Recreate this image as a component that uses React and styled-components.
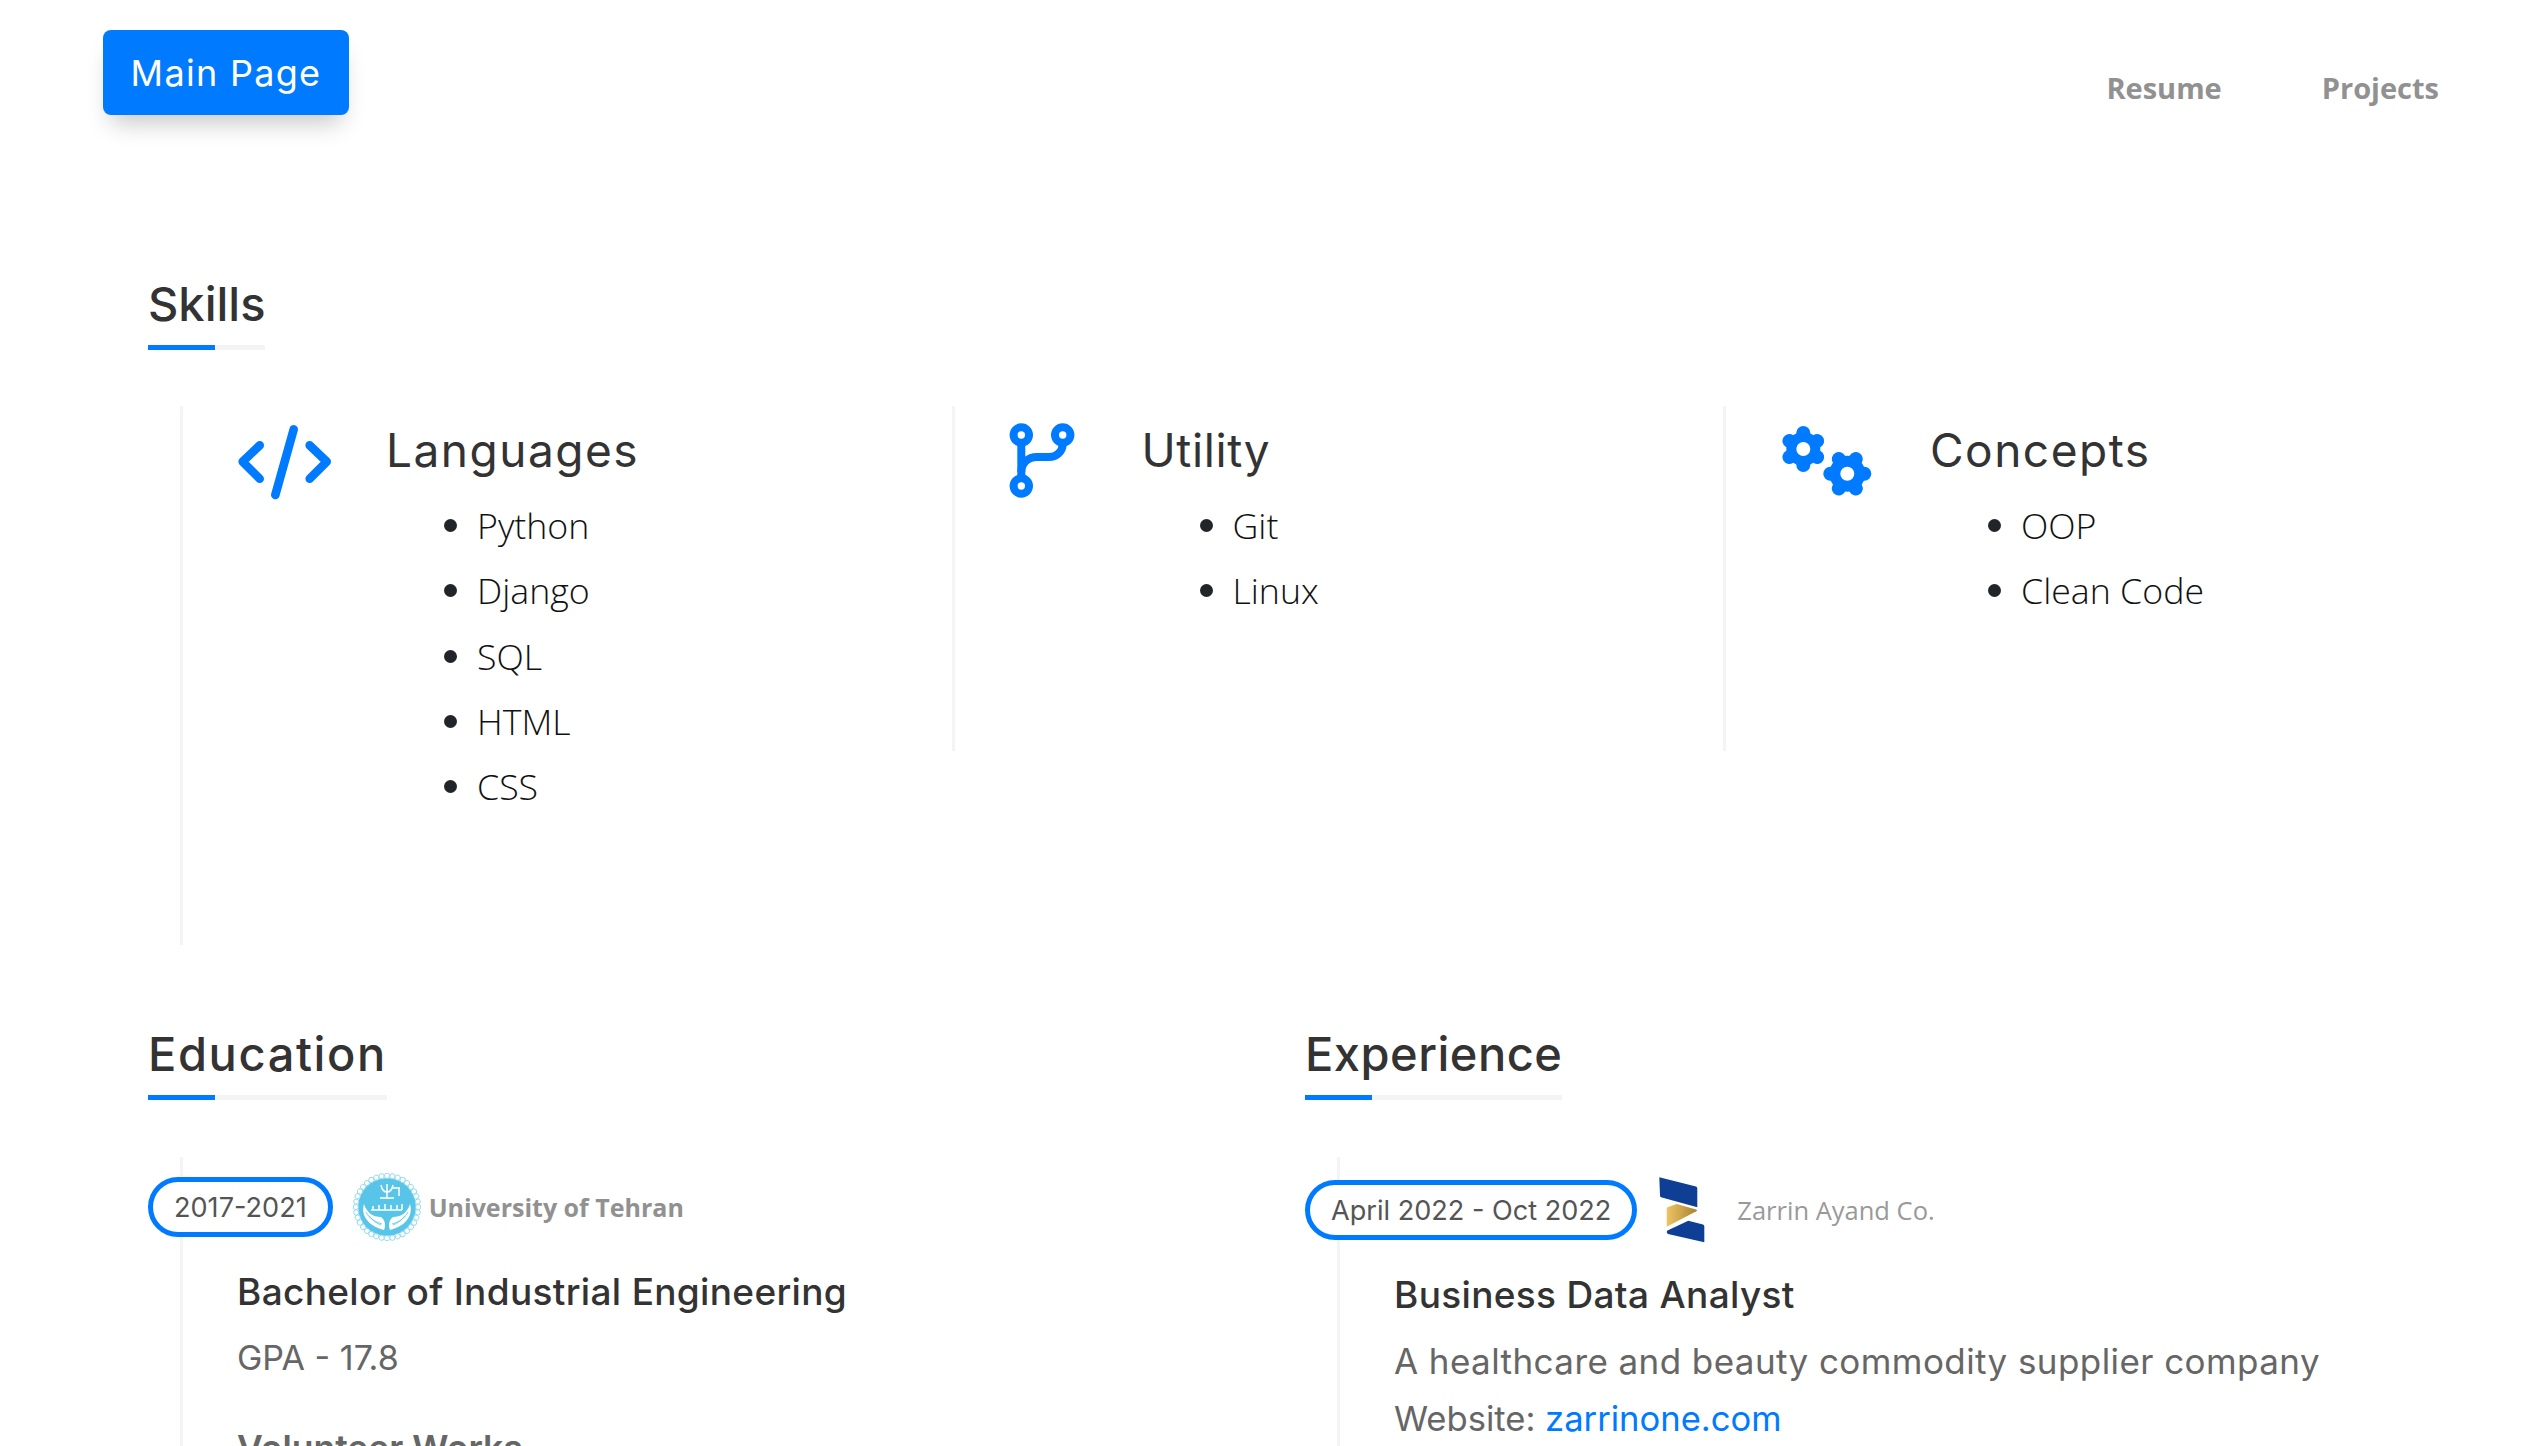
import React from 'react';
import styled, { createGlobalStyle } from 'styled-components';

const GlobalStyle = createGlobalStyle`
  html, body {
    margin: 0;
    padding: 0;
    background: #fff;
    font-family: "Open Sans", "Liberation Sans", sans-serif;
    color: #212529;
  }
  * { box-sizing: border-box; }
`;

const skills = [
  { title: 'Languages', Icon: CodeIcon, iconWidth: 149, spacing: '1.5px', items: ['Python', 'Django', 'SQL', 'HTML', 'CSS'], tall: true },
  { title: 'Utility', Icon: BranchIcon, iconWidth: 133, spacing: '0.6px', items: ['Git', 'Linux'] },
  { title: 'Concepts', Icon: GearsIcon, iconWidth: 150, spacing: '1.5px', items: ['OOP', 'Clean Code'] },
];

function CodeIcon() {
  return (
    <svg width="94" height="78" viewBox="16 12 94 78" fill="none" stroke="#007bff" strokeWidth="8.6" strokeLinecap="round" strokeLinejoin="round">
      <path d="M38.7 34.3 21.7 50.7 38.7 67.7" />
      <path d="M72.7 18.3 54.3 84" />
      <path d="M88.7 34.3 105.7 50.7 88.7 67.7" />
    </svg>
  );
}

function BranchIcon() {
  return (
    <svg width="66" height="75" viewBox="18 14 66 75" fill="none" stroke="#007bff" strokeWidth="8">
      <circle cx="30.3" cy="26" r="7.7" />
      <circle cx="71.7" cy="26" r="7.7" />
      <circle cx="30.3" cy="77" r="7.7" />
      <path d="M30.3 33V69" />
      <path d="M71.7 33.5V35C71.7 43 65 48 58 48H46C37 48 30.3 54 30.3 63" />
    </svg>
  );
}

function Gear({ cx, cy, r, tooth, start }) {
  const angles = [0, 60, 120, 180, 240, 300];
  return (
    <g>
      <circle cx={cx} cy={cy} r={r} fill="#007bff" />
      {angles.map((a) => (
        <line
          key={a}
          x1={cx}
          y1={cy}
          x2={cx}
          y2={cy - tooth}
          stroke="#007bff"
          strokeWidth="14"
          strokeLinecap="round"
          transform={`rotate(${a + start} ${cx} ${cy})`}
        />
      ))}
      <circle cx={cx} cy={cy} r="7" fill="#fff" />
    </g>
  );
}

function GearsIcon() {
  return (
    <svg width="92" height="76" viewBox="20 14 92 76">
      <Gear cx={43.3} cy={40} r={17} tooth={16} start={0} />
      <Gear cx={87.3} cy={64.7} r={18} tooth={17} start={30} />
    </svg>
  );
}

function TehranLogo() {
  const dots = Array.from({ length: 36 }, (_, i) => i * 10);
  return (
    <svg width="68" height="68" viewBox="0 0 68 68">
      <circle cx="34" cy="34" r="29" fill="#58c5e8" />
      {dots.map((a) => (
        <circle key={a} cx="34" cy="2.8" r="2.6" fill="#fff" stroke="#8ed8ef" strokeWidth="0.9" transform={`rotate(${a} 34 34)`} />
      ))}
      <g fill="none" stroke="#fff" strokeWidth="1.5">
        <path d="M28 12c1 5 3 7 6 7s5-2 6-7M34 11v15M27 25h14M40 15h7M46 15v8" />
        <path d="M18 37h31M20 33v4M26 32v5M32 31v6M38 32v5M44 32v5M49 31v6" />
      </g>
      <path d="M11 31C7 44 18 54 31 57 33 52 32 47 28 44 20 44 14 40 11 31ZM57 31C61 44 50 54 37 57 35 52 36 47 40 44 48 44 54 40 57 31Z" fill="#fff" />
      <g fill="none" stroke="#58c5e8" strokeWidth="0.8">
        <path d="M13 39c3 6 9 10 16 12M16 43c3 4 7 7 12 9M55 39c-3 6-9 10-16 12M52 43c-3 4-7 7-12 9" />
      </g>
    </svg>
  );
}

function ZarrinLogo() {
  return (
    <svg width="46" height="66" viewBox="19 12 46 66">
      <defs>
        <linearGradient id="zarrinGold" x1="0" x2="1" y1="0" y2="0">
          <stop offset="0" stopColor="#ecc566" />
          <stop offset="1" stopColor="#a98230" />
        </linearGradient>
      </defs>
      <path d="M19.3 12.3 56 21.6Q57.3 22 57.3 23.5V42.3L21 32.2Q20 31.9 20 30.5Z" fill="#0e3f94" />
      <path d="M26.7 44Q26.7 42.6 28 42L36.7 39 56 44.4Q58 45.2 56.3 46.3L26.7 61.7Z" fill="url(#zarrinGold)" />
      <path d="M27.5 65.6 48.3 55.7 63 59.6Q64.3 60 64.3 61.5V77.3L28 69Q25.8 67.2 27.5 65.6Z" fill="#0e3f94" />
    </svg>
  );
}

const App = () => {
  return (
    <Page>
      <GlobalStyle />
      <Header>
        <MainButton href="#">Main Page</MainButton>
        <Nav>
          <NavLink href="#">Resume</NavLink>
          <NavLink href="#">Projects</NavLink>
        </Nav>
      </Header>

      <SkillsSection>
        <SectionTitle>Skills</SectionTitle>
        <SkillsGrid>
          {skills.map(({ title, Icon, iconWidth, spacing, items, tall }) => (
            <SkillColumn key={title} $tall={tall}>
              <IconBox $width={iconWidth}>
                <Icon />
              </IconBox>
              <div>
                <SkillTitle $spacing={spacing}>{title}</SkillTitle>
                <SkillList>
                  {items.map((item) => (
                    <SkillItem key={item}>{item}</SkillItem>
                  ))}
                </SkillList>
              </div>
            </SkillColumn>
          ))}
        </SkillsGrid>
      </SkillsSection>

      <TwoColumns>
        <div>
          <SectionTitle $spacing="1.6px">Education</SectionTitle>
          <Timeline>
            <Entry>
              <EntryHead>
                <DatePill>2017-2021</DatePill>
                <LogoSlot>
                  <TehranLogo />
                </LogoSlot>
                <SchoolName>University of Tehran</SchoolName>
              </EntryHead>
              <EntryBody>
                <EntryTitle>Bachelor of Industrial Engineering</EntryTitle>
                <EntryText>GPA - 17.8</EntryText>
                <SubHeading>Volunteer Works</SubHeading>
              </EntryBody>
            </Entry>
          </Timeline>
        </div>
        <div>
          <SectionTitle $spacing="0.5px">Experience</SectionTitle>
          <Timeline $work>
            <Entry>
              <EntryHead>
                <DatePill>April 2022 - Oct 2022</DatePill>
                <LogoSlot $work>
                  <ZarrinLogo />
                </LogoSlot>
                <CompanyName>Zarrin Ayand Co.</CompanyName>
              </EntryHead>
              <EntryBody>
                <EntryTitle>Business Data Analyst</EntryTitle>
                <EntryText $large $spacing="0.42px">A healthcare and beauty commodity supplier company</EntryText>
                <EntryText $large $small>
                  Website: <SiteLink href="#">zarrinone.com</SiteLink>
                </EntryText>
              </EntryBody>
            </Entry>
          </Timeline>
        </div>
      </TwoColumns>
    </Page>
  );
};

const Page = styled.div`
  width: 2542px;
  height: 1446px;
  overflow: hidden;
  background: #fff;
`;

const Header = styled.header`
  display: flex;
  justify-content: space-between;
  padding: 30px 103px 0 103px;
  height: 115px;
`;

const MainButton = styled.a`
  display: flex;
  align-items: center;
  justify-content: center;
  width: 246px;
  height: 85px;
  background: #007bff;
  border-radius: 8px;
  color: #fff;
  font-family: "Inter", sans-serif;
  font-size: 36px;
  letter-spacing: 1.3px;
  text-decoration: none;
  box-shadow: 0 16px 24px -8px rgba(0, 0, 0, 0.22);
`;

const Nav = styled.nav`
  display: flex;
  gap: 100px;
  padding-top: 37px;
`;

const NavLink = styled.a`
  color: #919191;
  font-size: 29px;
  font-weight: 700;
  line-height: 42px;
  text-decoration: none;
`;

const SkillsSection = styled.section`
  padding: 161px 0 0 148px;
`;

const SectionTitle = styled.h2`
  position: relative;
  display: inline-block;
  margin: 0;
  padding-bottom: 13px;
  border-bottom: 5px solid #f4f4f6;
  color: #333;
  font-family: "Inter", sans-serif;
  font-size: 47px;
  font-weight: 500;
  letter-spacing: ${({ $spacing }) => $spacing || '0'};
  line-height: 56px;

  &::after {
    content: '';
    position: absolute;
    left: 0;
    bottom: -5px;
    width: 67px;
    height: 5px;
    background: #007bff;
  }
`;

const SkillsGrid = styled.div`
  display: grid;
  grid-template-columns: repeat(3, 771.5px);
  align-items: start;
  margin: 56px 0 0 32px;
`;

const SkillColumn = styled.article`
  display: flex;
  height: ${({ $tall }) => ($tall ? '539px' : '345px')};
  padding: 17px 0 0 54px;
  border-left: 3px solid #f3f4f8;
`;

const IconBox = styled.div`
  width: ${({ $width }) => $width}px;
  flex-shrink: 0;
`;

const SkillTitle = styled.h3`
  margin: 0;
  color: #333;
  font-family: "Inter", sans-serif;
  font-size: 46px;
  font-weight: 400;
  letter-spacing: ${({ $spacing }) => $spacing};
  line-height: 54px;
`;

const SkillList = styled.ul`
  margin: 16px 0 0;
  padding: 0 0 0 91px;
  list-style: none;
`;

const SkillItem = styled.li`
  position: relative;
  color: #111;
  font-size: 35.7px;
  font-weight: 300;
  line-height: 65.25px;

  &::before {
    content: '';
    position: absolute;
    left: -33px;
    top: 26px;
    width: 13px;
    height: 13px;
    border-radius: 50%;
    background: #212529;
  }
`;

const TwoColumns = styled.section`
  display: grid;
  grid-template-columns: 1157px 1fr;
  padding: 81px 0 0 148px;
`;

const Timeline = styled.div`
  height: 400px;
  margin: 57px 0 0 32px;
  padding-top: ${({ $work }) => ($work ? '19px' : '16px')};
  border-left: 3px solid #f3f4f8;
`;

const Entry = styled.div`
  margin-left: -35px;
`;

const EntryHead = styled.div`
  display: flex;
  align-items: center;
  height: 68px;
`;

const DatePill = styled.span`
  display: inline-flex;
  align-items: center;
  height: 60px;
  padding: 0 21px;
  border: 5px solid #007bff;
  border-radius: 30px;
  background: #fff;
  color: #555;
  font-family: "Inter", sans-serif;
  font-size: 27.1px;
  white-space: nowrap;
`;

const LogoSlot = styled.div`
  display: flex;
  margin: 0 ${({ $work }) => ($work ? '32px' : '8px')} 0 ${({ $work }) => ($work ? '22px' : '20px')};
`;

const SchoolName = styled.span`
  color: #919191;
  font-size: 25px;
  font-weight: 700;
`;

const CompanyName = styled.span`
  color: #999;
  font-size: 25.5px;
`;

const EntryBody = styled.div`
  padding: 26px 0 0 89px;
`;

const EntryTitle = styled.h4`
  margin: 0 0 13px;
  color: #333;
  font-family: "Inter", sans-serif;
  font-size: 37px;
  font-weight: 500;
  letter-spacing: 0.33px;
  line-height: 50px;
`;

const EntryText = styled.p`
  margin: ${({ $large }) => ($large ? '0' : '16px 0 0')};
  color: #666;
  font-family: "Inter", sans-serif;
  font-size: ${({ $large, $small }) => ($small ? '34.6px' : $large ? '35px' : '34px')};
  letter-spacing: ${({ $spacing }) => $spacing || '0'};
  line-height: ${({ $large }) => ($large ? '57px' : '50px')};
`;

const SubHeading = styled.h5`
  margin: 46px 0 0;
  color: #666;
  font-family: "Inter", sans-serif;
  font-size: 35.5px;
  font-weight: 600;
  line-height: 40px;
`;

const SiteLink = styled.a`
  color: #007bff;
  text-decoration: none;
`;

export default App;
